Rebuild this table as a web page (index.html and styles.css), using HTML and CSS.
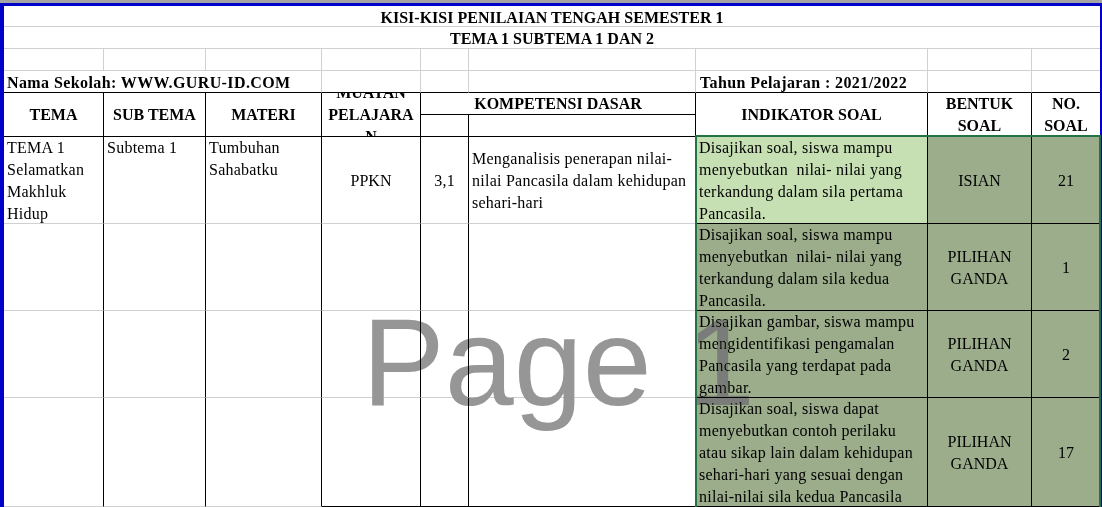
FILE: index.html
```html
<!DOCTYPE html>
<html lang="id">
<head>
<meta charset="utf-8">
<title>Kisi-kisi PTS</title>
<link rel="stylesheet" href="styles.css">
</head>
<body>
<div class="window">
  <div class="sheet">
    <!-- title rows -->
    <div class="c span-all gb hc bold tpad"><span>KISI-KISI PENILAIAN TENGAH SEMESTER 1</span></div>
    <div class="c span-all gb hc bold tpad"><span>TEMA 1 SUBTEMA 1 DAN 2</span></div>
    <!-- empty row -->
    <div class="c gr gb"></div><div class="c gr gb"></div><div class="c gr gb"></div>
    <div class="c gr gb"></div><div class="c gr gb"></div><div class="c gr gb"></div>
    <div class="c gr gb"></div><div class="c gr gb"></div><div class="c gb"></div>
    <!-- school / year -->
    <div class="c span3 gr bb bold tpad lpad wide"><span>Nama Sekolah: WWW.GURU-ID.COM</span></div>
    <div class="c gr bb"></div><div class="c gr bb"></div><div class="c gr bb"></div>
    <div class="c gr bb bold tpad lpad2 wide"><span>Tahun Pelajaran : 2021/2022</span></div>
    <div class="c gr bb"></div><div class="c bb"></div>
    <!-- header -->
    <div class="c rspan2 br bb hc bold"><span>TEMA</span></div>
    <div class="c rspan2 br bb hc bold"><span>SUB TEMA</span></div>
    <div class="c rspan2 br bb hc bold"><span>MATERI</span></div>
    <div class="c rspan2 br bb hc bold"><span>MUATAN<br>PELAJARA<br>N</span></div>
    <div class="c span2 br bb hc bold"><span>KOMPETENSI DASAR</span></div>
    <div class="c rspan2 br bb hc bold"><span>INDIKATOR SOAL</span></div>
    <div class="c rspan2 br bb hc bold"><span>BENTUK<br>SOAL</span></div>
    <div class="c rspan2 bb hc bold"><span>NO.<br>SOAL</span></div>
    <div class="c br bb"></div>
    <div class="c br bb"></div>
    <!-- row A -->
    <div class="c br gb lpad ls"><span>TEMA 1<br>Selamatkan<br>Makhluk<br>Hidup</span></div>
    <div class="c br gb lpad ls"><span>Subtema 1</span></div>
    <div class="c br gb lpad ls"><span>Tumbuhan<br>Sahabatku</span></div>
    <div class="c br gb hc bpad"><span>PPKN</span></div>
    <div class="c br gb hc bpad ls"><span>3,1</span></div>
    <div class="c br gb vc bpad lpad ls"><span>Menganalisis penerapan nilai-<br>nilai Pancasila dalam kehidupan<br>sehari-hari</span></div>
    <div class="c br bb g1 lpad ls"><span>Disajikan soal, siswa mampu<br>menyebutkan&nbsp; nilai- nilai yang<br>terkandung dalam sila pertama<br>Pancasila.</span></div>
    <div class="c br bb g2 hc bpad"><span>ISIAN</span></div>
    <div class="c bb g2 hc bpad"><span>21</span></div>
    <!-- row B -->
    <div class="c br gb"></div><div class="c br gb"></div><div class="c br gb"></div>
    <div class="c br gb"></div><div class="c br gb"></div><div class="c br gb"></div>
    <div class="c br bb g2 lpad ls"><span>Disajikan soal, siswa mampu<br>menyebutkan&nbsp; nilai- nilai yang<br>terkandung dalam sila kedua<br>Pancasila.</span></div>
    <div class="c br bb g2 hc bpad"><span>PILIHAN<br>GANDA</span></div>
    <div class="c bb g2 hc bpad"><span>1</span></div>
    <!-- row C -->
    <div class="c br gb"></div><div class="c br gb"></div><div class="c br gb"></div>
    <div class="c br gb"></div><div class="c br gb"></div><div class="c br gb"></div>
    <div class="c br bb g2 lpad ls"><span>Disajikan gambar, siswa mampu<br>mengidentifikasi pengamalan<br>Pancasila yang terdapat pada<br>gambar.</span></div>
    <div class="c br bb g2 hc bpad"><span>PILIHAN<br>GANDA</span></div>
    <div class="c bb g2 hc bpad"><span>2</span></div>
    <!-- row D -->
    <div class="c br gb"></div><div class="c br gb"></div><div class="c br gb"></div>
    <div class="c br bb"></div><div class="c br bb"></div><div class="c br bb"></div>
    <div class="c br bb g2 lpad ls"><span>Disajikan soal, siswa dapat<br>menyebutkan contoh perilaku<br>atau sikap lain dalam kehidupan<br>sehari-hari yang sesuai dengan<br>nilai-nilai sila kedua Pancasila</span></div>
    <div class="c br bb g2 hc bpad"><span>PILIHAN<br>GANDA</span></div>
    <div class="c bb g2 hc bpad"><span>17</span></div>

    <div class="watermark"><span class="wm-page">Page </span><span class="wm-num">1</span></div>
    <div class="selection"></div>
  </div>
</div>
</body>
</html>
```

FILE: styles.css
```css
html, body {
  margin: 0;
  padding: 0;
  background: #ffffff;
  width: 1102px;
  height: 507px;
  overflow: hidden;
}

.window {
  border-top: 3px solid #a4a4a4;
}

.sheet {
  position: relative;
  display: grid;
  grid-template-columns: 100px 102px 116px 99px 48px 227px 232px 104px 68px;
  grid-template-rows: 21px 22px 22px 22px 22px 22px 87px 87px 87px 109px;
  border-top: 3px solid #0000c8;
  border-left: 4px solid #0000c8;
  border-right: 2px solid #0000c8;
  background: #ffffff;
  color: #000000;
}

.c {
  box-sizing: border-box;
  display: flex;
  align-items: flex-start;
  overflow: hidden;
  white-space: nowrap;
  font-family: "Liberation Serif", "Times New Roman", serif;
  font-size: 16px;
  line-height: 22px;
  min-width: 0;
  min-height: 0;
}

.bold { font-weight: bold; }

.span-all { grid-column: 1 / -1; }
.span3 { grid-column: span 3; }
.span2 { grid-column: span 2; }
.rspan2 { grid-row: span 2; }

.gr { border-right: 1px solid #d0d0d0; }
.gb { border-bottom: 1px solid #d0d0d0; }
.br { border-right: 1px solid #000000; }
.bb { border-bottom: 1px solid #000000; }

.hc {
  justify-content: center;
  align-items: center;
  text-align: center;
}
.vc { align-items: center; }

.tpad { padding-top: 3px; align-items: center; }
.bpad { padding-top: 2px; }
.lpad { padding-left: 3px; }
.lpad2 { padding-left: 4px; }

.ls { letter-spacing: 0.25px; }
.wide { letter-spacing: 0.4px; }

.g1 { background: #c6e0b4; }
.g2 { background: #9bad8b; }

.watermark {
  position: absolute;
  left: 358px;
  top: 294px;
  font-family: "Liberation Sans", Arial, sans-serif;
  font-size: 124px;
  line-height: 124px;
  white-space: pre;
  color: #969696;
  mix-blend-mode: darken;
  pointer-events: none;
}
.wm-num { color: #7a7c7a; }

.selection {
  position: absolute;
  left: 691px;
  top: 129px;
  right: -1px;
  bottom: -10px;
  border: 2px solid #217346;
  pointer-events: none;
}
```
